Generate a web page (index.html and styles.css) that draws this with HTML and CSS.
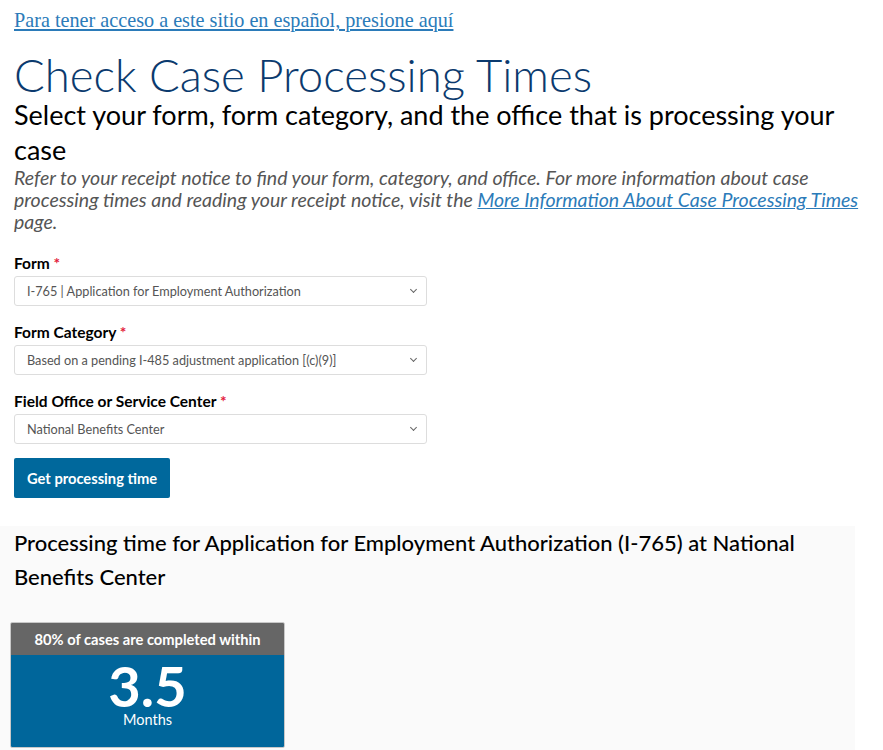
FILE: index.html
```html
<!DOCTYPE html>
<html lang="en">
<head>
  <meta charset="UTF-8">
  <title>Check Case Processing Times</title>
  <link rel="stylesheet" href="styles.css">
</head>
<body>

  <div class="page">
    <a class="lang-link" href="#">Para tener acceso a este sitio en español, presione aquí</a>

    <h1>Check Case Processing Times</h1>
    <h2>Select your form, form category, and the office that is processing your case</h2>
    <p class="intro">Refer to your receipt notice to find your form, category, and office. For more information about case processing times and reading your receipt notice, visit the <a href="#">More Information About Case Processing Times</a> page.</p>

    <form class="times-form">
      <div class="field">
        <label for="form">Form <span class="req">*</span></label>
        <div class="select-wrap">
          <select id="form">
            <option>I-765 | Application for Employment Authorization</option>
          </select>
        </div>
      </div>

      <div class="field">
        <label for="category">Form Category <span class="req">*</span></label>
        <div class="select-wrap">
          <select id="category">
            <option>Based on a pending I-485 adjustment application [(c)(9)]</option>
          </select>
        </div>
      </div>

      <div class="field">
        <label for="office">Field Office or Service Center <span class="req">*</span></label>
        <div class="select-wrap">
          <select id="office">
            <option>National Benefits Center</option>
          </select>
        </div>
      </div>

      <button type="button" class="btn">Get processing time</button>
    </form>
  </div>

  <section class="result">
    <h3>Processing time for Application for Employment Authorization (I-765) at National Benefits Center</h3>

    <div class="time-card">
      <div class="time-head">80% of cases are completed within</div>
      <div class="time-body">
        <div class="time-num">3.5</div>
        <div class="time-unit">Months</div>
      </div>
    </div>
  </section>

</body>
</html>
```

FILE: styles.css
```css
body {
  margin: 0;
  font-family: Lato, "Open Sans", sans-serif;
  color: #000;
  background: #fff;
}

.page {
  padding: 8px 14px 0 14px;
}

.lang-link {
  display: block;
  width: max-content;
  font-family: "Liberation Serif", serif;
  font-size: 20.2px;
  line-height: 24px;
  color: #2b7bb9;
  text-decoration: underline;
}

h1 {
  font-weight: 300;
  font-size: 45.5px;
  line-height: 50px;
  color: #0b3a6e;
  margin: 18px 0 0 0;
}

h2 {
  font-weight: 400;
  font-size: 27px;
  line-height: 35px;
  margin: -3px 0 0 0;
  max-width: 850px;
}

.intro {
  font-style: italic;
  font-size: 19.5px;
  line-height: 22px;
  color: #555;
  margin: 0;
  max-width: 860px;
}

.intro a {
  color: #2b7bb9;
}

.times-form {
  margin-top: 21px;
  width: 413px;
}

.field {
  margin-bottom: 17px;
}

.field label {
  display: block;
  font-weight: 700;
  font-size: 15.5px;
  line-height: 18px;
  margin-bottom: 4px;
}

.req {
  color: #e31c3d;
}

.select-wrap {
  position: relative;
}

.select-wrap::after {
  content: '';
  position: absolute;
  right: 11px;
  top: 11px;
  width: 4px;
  height: 4px;
  border-right: 1.3px solid #666;
  border-bottom: 1.3px solid #666;
  transform: rotate(45deg);
  pointer-events: none;
}

select {
  appearance: none;
  width: 100%;
  height: 30px;
  padding: 0 12px;
  font-family: Lato, sans-serif;
  font-size: 12.7px;
  color: #555;
  background: #fff;
  border: 1px solid #ddd;
  border-radius: 3px;
}

.btn {
  margin-top: -3px;
  padding: 0 13px;
  height: 40px;
  background: #00689c;
  color: #fff;
  border: none;
  border-radius: 2px;
  font-family: Lato, sans-serif;
  font-weight: 700;
  font-size: 14.7px;
}

.result {
  margin-top: 28px;
  width: 855px;
  background: #fafafa;
  padding: 0 14px 10px 10px;
  box-sizing: border-box;
}

.result h3 {
  font-weight: 500;
  font-size: 22px;
  line-height: 34px;
  margin: 0 0 28px 4px;
}

.time-card {
  width: 273px;
  border: 1px solid #c8c8c8;
  border-radius: 2px;
  overflow: hidden;
  color: #fff;
  text-align: center;
}

.time-head {
  background: #666;
  height: 32px;
  line-height: 32px;
  font-weight: 700;
  font-size: 14.7px;
}

.time-body {
  background: #00669b;
  height: 92px;
  padding-top: 4px;
  box-sizing: border-box;
}

.time-num {
  font-weight: 700;
  font-size: 56px;
  line-height: 54px;
}

.time-unit {
  font-size: 14.5px;
  line-height: 14px;
}
```
